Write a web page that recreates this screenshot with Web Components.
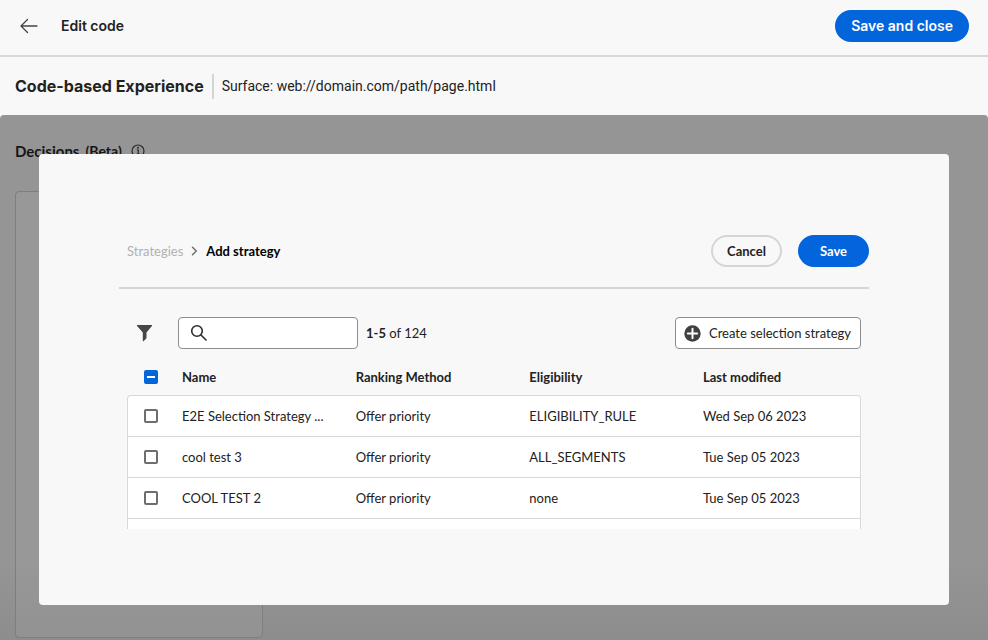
<!DOCTYPE html>
<html lang="en">
<head>
<meta charset="utf-8">
<title>Edit code</title>
<style>
html, body { height: 100%; }
body {
  margin: 0;
  background: #f8f8f8;
  color: #222;
  --ui: "Inter", "Liberation Sans", sans-serif;
  --clean: "Lato", "Noto Sans", sans-serif;
  --blue: #0265dc;
}
</style>
</head>
<body>
<code-editor-page></code-editor-page>

<template id="t-page">
  <style>
    :host { display: flex; flex-direction: column; height: 100%; overflow: hidden; font: 14px/20px var(--ui); }
    experience-workspace { flex: 1; min-height: 0; }
  </style>
  <editor-header>Edit code</editor-header>
  <surface-bar>
    <span slot="title">Code-based Experience</span>
    Surface: web://domain.com/path/page.html
  </surface-bar>
  <experience-workspace>
    <strategy-dialog slot="overlay"></strategy-dialog>
  </experience-workspace>
</template>

<template id="t-header">
  <style>
    :host { display: block; border-bottom: 2px solid #d8d8d8; }
    header { display: flex; align-items: center; padding: 10px 19px 13px; }
    .back { display: flex; padding: 0; border: 0; background: none; }
    h1 { flex: 1; margin: 0 0 0 23px; font: 600 14px/20px var(--ui); }
    svg { display: block; }
  </style>
  <header>
    <button class="back" aria-label="Back">
      <svg width="19" height="18" viewBox="0 0 19 18" fill="none" stroke="#444" stroke-width="1.3" stroke-linecap="round" stroke-linejoin="round"><path d="M18 9H2M8.500 2.500L2 9l6.500 6.500"/></svg>
    </button>
    <h1><slot></slot></h1>
    <pill-button variant="accent" face="ui">Save and close</pill-button>
  </header>
</template>

<template id="t-pill">
  <style>
    :host { display: inline-block; }
    button {
      display: block; height: 32px; padding: 0 14px; border: 2px solid #d5d5d5; border-radius: 16px;
      background: #f8f8f8; color: #222; font: 700 13px/18px var(--clean); white-space: nowrap;
    }
    :host([variant=accent]) button { background: var(--blue); border-color: var(--blue); color: #fff; }
    :host([variant=accent]:not([face])) button { padding: 0 20px; }
    :host([face=ui]) button { font: 600 14px/18px var(--ui); }
  </style>
  <button type="button"><slot></slot></button>
</template>

<template id="t-surface">
  <style>
    :host { display: flex; align-items: center; height: 58px; padding: 0 15px; white-space: nowrap; }
    h2 { margin: 0 8px 0 0; font: 700 16px/24px var(--ui); }
    .path { padding-left: 8px; border-left: 2px solid #d5d5d5; font: 14px/25px "Roboto", "Liberation Sans", sans-serif; }
  </style>
  <h2><slot name="title"></slot></h2>
  <div class="path"><slot></slot></div>
</template>

<template id="t-workspace">
  <style>
    :host {
      display: flex; flex-direction: column; position: relative; box-sizing: border-box;
      padding: 26px 15px 2px; border-radius: 4px 4px 0 0;
      background: linear-gradient(#959595 85%, #8d8d8d); color: #151515;
    }
    h2 { display: flex; align-items: center; gap: 6px; margin: 0 0 30px; font: 700 15px/20px var(--clean); }
    small { font-size: 14px; }
    svg { display: block; margin-left: 3px; }
    .panel { flex: 1; width: 25.7%; border: 1px solid #7e7e7e; border-radius: 4px; background: rgba(160,160,160,.3); }
  </style>
  <h2>Decisions <small>(Beta)</small>
    <svg width="14" height="14" viewBox="0 0 14 14" fill="none" stroke="#2b2b2b" stroke-width="1.2"><circle cx="7" cy="7" r="6"/><path d="M5.800 6h1.500v4M5.500 10.200h3.200"/><circle cx="7" cy="3.700" r=".4" fill="#2b2b2b"/></svg>
  </h2>
  <div class="panel"></div>
  <slot name="overlay"></slot>
</template>

<template id="t-dialog">
  <style>
    :host {
      position: absolute; inset: 39px 39px 35px; display: flex; flex-direction: column; box-sizing: border-box;
      padding: 81px 80px 76px; border-radius: 4px; background: #f8f8f8; color: #222;
      font: 13px/20px var(--clean);
    }
    header { display: flex; align-items: center; padding: 0 0 20px 8px; border-bottom: 2px solid #d5d5d5; }
    nav { flex: 1; display: flex; align-items: center; }
    a { color: #b1b1b1; text-decoration: none; }
    nav svg { margin: 0 8px; }
    strong { color: #000; }
    .actions { display: flex; gap: 16px; }
    strategy-toolbar { margin: 28px 8px 0; }
    strategy-table { flex: 1; min-height: 0; margin: 10px 8px 0; }
  </style>
  <header>
    <nav aria-label="Breadcrumb">
      <a href="#strategies">Strategies</a>
      <svg width="7" height="10" viewBox="0 0 7 10" fill="none" stroke="#6e6e6e" stroke-width="1.500" stroke-linecap="round" stroke-linejoin="round"><path d="M1.500 1.300L5.300 5 1.500 8.700"/></svg>
      <strong>Add strategy</strong>
    </nav>
    <div class="actions">
      <pill-button>Cancel</pill-button>
      <pill-button variant="accent">Save</pill-button>
    </div>
  </header>
  <strategy-toolbar></strategy-toolbar>
  <strategy-table></strategy-table>
</template>

<template id="t-toolbar">
  <style>
    :host { display: flex; align-items: center; }
    svg { display: block; }
    .filter { padding: 0 25px 0 9px; border: 0; background: none; }
    .search { display: flex; align-items: center; box-sizing: border-box; width: 180px; height: 32px; padding: 0 11px; border: 1px solid #8e8e8e; border-radius: 4px; background: #fff; }
    input { flex: 1; min-width: 0; margin-left: 8px; padding: 0; border: 0; outline: 0; background: none; font: inherit; }
    .count { flex: 1; margin-left: 8px; white-space: nowrap; }
    .create { display: flex; align-items: center; gap: 8px; height: 32px; padding: 0 9px 0 8px; border: 1px solid #8e8e8e; border-radius: 4px; background: #fff; color: #222; font: inherit; white-space: nowrap; }
  </style>
  <button class="filter" aria-label="Filter">
    <svg width="17" height="18" viewBox="0 0 17 18"><path fill="#464646" d="M1.600 1h13.800c.6 0 .9.700.5 1.100L10.500 8.500v5.800l-3 2.900c-.3.200-.7 0-.7-.3V8.500L1.100 2.100C.7 1.700 1 1 1.600 1z"/></svg>
  </button>
  <label class="search">
    <svg width="18" height="18" viewBox="0 0 18 18" fill="none" stroke="#2c2c2c" stroke-width="1.600" stroke-linecap="round"><circle cx="7" cy="7" r="5.300"/><path d="M11 11l5 5"/></svg>
    <input type="text" aria-label="Search strategies">
  </label>
  <span class="count"><b>1-5</b> of 124</span>
  <button class="create" type="button">
    <svg width="17" height="17" viewBox="0 0 17 17"><circle cx="8.500" cy="8.500" r="8.200" fill="#404040"/><path d="M8.500 3.800v9.400M3.800 8.500h9.400" stroke="#fff" stroke-width="2" stroke-linecap="round"/></svg>
    Create selection strategy
  </button>
</template>

<template id="t-table">
  <style>
    :host { display: block; overflow: hidden; }
    table { width: 100%; table-layout: fixed; border-collapse: separate; border-spacing: 0; }
    th, td { padding: 0 0 0 10px; text-align: left; white-space: nowrap; }
    th { height: 36px; font-weight: 700; }
    td { height: 40px; background: #fff; border-bottom: 1px solid #d8d8d8; }
    th:first-child, td:first-child { width: 45px; padding-left: 17px; box-sizing: border-box; }
    th:last-child { width: 168px; box-sizing: border-box; }
    td:first-child { border-left: 1px solid #d8d8d8; padding-left: 16px; }
    td:last-child { border-right: 1px solid #d8d8d8; }
    tbody tr:first-child td { border-top: 1px solid #d8d8d8; }
    tbody tr:first-child td:first-child { border-top-left-radius: 4px; }
    tbody tr:first-child td:last-child { border-top-right-radius: 4px; }
    input {
      appearance: none; display: block; width: 14px; height: 14px; margin: 0;
      border: 2px solid #6e6e6e; border-radius: 2px; background: #fff;
    }
    input:indeterminate {
      border-color: var(--blue);
      background: linear-gradient(#fff, #fff) center / 8px 2px no-repeat var(--blue);
    }
  </style>
  <table>
    <thead><tr><th><input type="checkbox" aria-label="Select all"></th><th>Name</th><th>Ranking Method</th><th>Eligibility</th><th>Last modified</th></tr></thead>
    <tbody></tbody>
  </table>
</template>

<script>
const define = (name, id, setup) => customElements.define(name, class extends HTMLElement {
  constructor() {
    super();
    const root = this.attachShadow({ mode: "open" });
    root.append(document.getElementById(id).content.cloneNode(true));
    if (setup) setup(root);
  }
});

const strategies = [
  ["E2E Selection Strategy ...", "Offer priority", "ELIGIBILITY_RULE", "Wed Sep 06 2023"],
  ["cool test 3", "Offer priority", "ALL_SEGMENTS", "Tue Sep 05 2023"],
  ["COOL TEST 2", "Offer priority", "none", "Tue Sep 05 2023"],
  ["", "", "", ""]
];

define("pill-button", "t-pill");
define("strategy-toolbar", "t-toolbar");
define("strategy-table", "t-table", root => {
  root.querySelector("input").indeterminate = true;
  const body = root.querySelector("tbody");
  for (const row of strategies) {
    const tr = body.insertRow();
    const pick = tr.insertCell();
    if (row[0]) {
      const box = document.createElement("input");
      box.type = "checkbox";
      box.setAttribute("aria-label", "Select " + row[0]);
      pick.append(box);
    }
    for (const text of row) tr.insertCell().textContent = text;
  }
});
define("strategy-dialog", "t-dialog");
define("experience-workspace", "t-workspace");
define("surface-bar", "t-surface");
define("editor-header", "t-header");
define("code-editor-page", "t-page");
</script>
</body>
</html>
